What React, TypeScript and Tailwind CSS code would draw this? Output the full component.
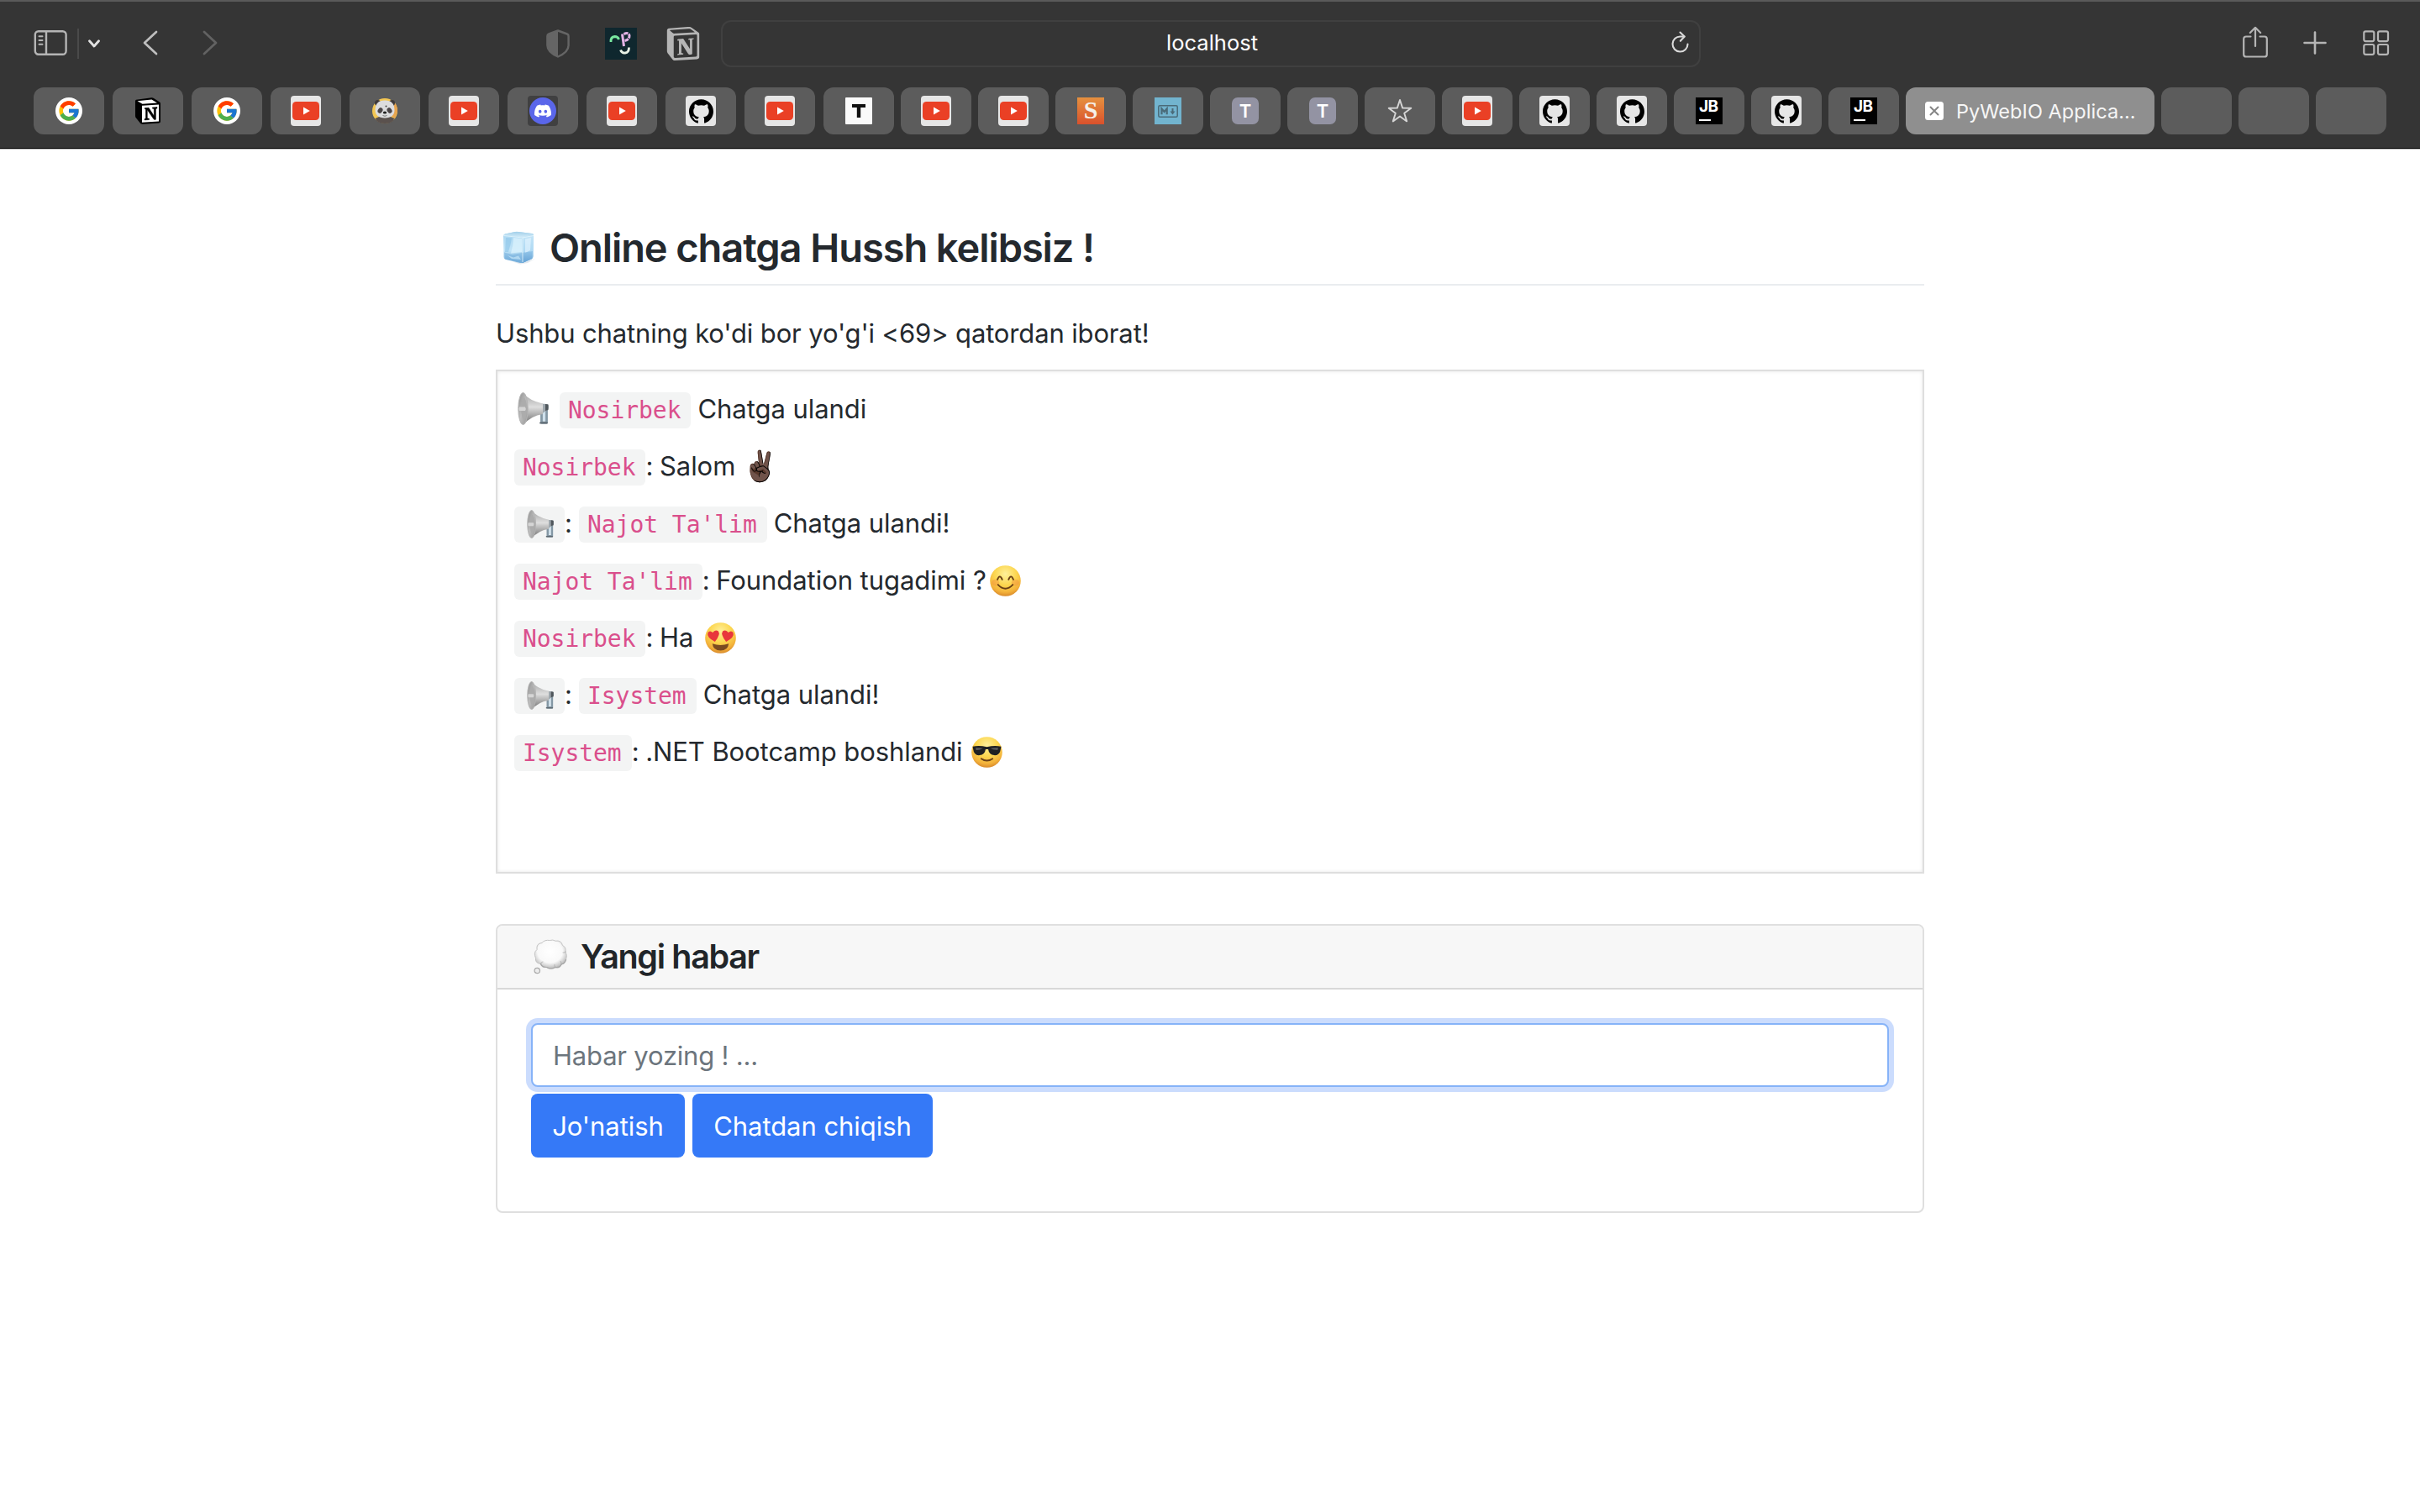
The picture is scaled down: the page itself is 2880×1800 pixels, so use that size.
import type { ReactNode } from "react";
import { FcGoogle } from "react-icons/fc";
import { SiNotion, SiDiscord, SiGithub } from "react-icons/si";

/* ---------- tab favicons ---------- */

function Google() {
  return (
    <span className="flex size-8 items-center justify-center rounded-full bg-white">
      <FcGoogle size={28} />
    </span>
  );
}

function Notion() {
  return (
    <svg viewBox="0 0 32 32" className="size-8">
      <path d="M2 2.800 L20.500 0.300 Q22 0.200 23 1 L30 5.500 Q31 6.200 31 7.500 V28.500 Q31 30.300 29 30.500 L10 31.800 Q8 31.900 7 30.800 L2 24.500 Q1 23.500 1 22 V4.500 Q1 3 2 2.800Z" fill="#000" />
      <path d="M3.500 4.300 L20.500 2.400 L27 6.500 L9.500 7.700Z" fill="#fff" />
      <path d="M9 9.800 L29 8.500 V28.500 L9 29.700Z" fill="#fff" />
      <path d="M12.300 12.600 L17 12.300 L23.300 22 V13.600 L21.300 13.100 V12 L27 11.600 V12.900 L25.400 13.500 V26.200 Q23.800 27.200 22.500 25.300 L15.300 14.800 V24.700 L17.500 25.300 V26.500 L12 26.900 V25.600 L13.500 25 V14.200 L12.300 13.800Z" fill="#000" stroke="#000" strokeWidth="0.500" />
    </svg>
  );
}

function YouTube() {
  return (
    <span className="flex size-9 items-center justify-center rounded-[4px] bg-[#e6e6e6]">
      <svg viewBox="0 0 32 22" className="h-[22px] w-8">
        <rect width="32" height="22" rx="4.500" fill="#ea4025" />
        <path d="M13 6.500 L20.800 11 L13 15.500Z" fill="#fff" />
      </svg>
    </span>
  );
}

function Panda() {
  return (
    <svg viewBox="0 0 32 32" className="size-8">
      <circle cx="16" cy="16" r="15" fill="#f3c653" />
      <path d="M16 16 L24 3 A15 15 0 0 1 31 17 L28 25Z" fill="#e8a54f" />
      <path d="M4.500 25 Q16 18 27.500 25 Q25 31 16 31 Q7 31 4.500 25Z" fill="#5a514e" />
      <circle cx="7.500" cy="6.500" r="3.500" fill="#3f3a3b" />
      <circle cx="24.500" cy="6.500" r="3.500" fill="#3f3a3b" />
      <path d="M4.500 15 Q4.500 3.500 16 3.500 Q27.500 3.500 27.500 15 Q27.500 24 16 24.500 Q4.500 24 4.500 15Z" fill="#dcdcde" />
      <ellipse cx="10.500" cy="15.500" rx="2.700" ry="3.500" transform="rotate(35 10.500 15.500)" fill="#4b4547" />
      <ellipse cx="21.500" cy="15.500" rx="2.700" ry="3.500" transform="rotate(-35 21.500 15.500)" fill="#4b4547" />
      <circle cx="17.500" cy="10.500" r="1" fill="#444" />
      <ellipse cx="16" cy="18" rx="2.200" ry="1.500" fill="#222" />
      <path d="M13.500 21.500 Q16 23 18.500 21.500" stroke="#777" strokeWidth="1" fill="none" />
    </svg>
  );
}

function Discord() {
  return (
    <span className="flex size-9 items-center justify-center rounded-[4px] bg-[#404041]">
      <span className="flex size-8 items-center justify-center rounded-full bg-[#5a66ea]">
        <SiDiscord size={20} color="#fff" />
      </span>
    </span>
  );
}

function GitHub() {
  return (
    <span className="flex size-9 items-center justify-center rounded-[4px] bg-[#e6e6e6]">
      <SiGithub size={29} color="#000" />
    </span>
  );
}

function TypeT() {
  return (
    <span className="flex size-8 items-center justify-center rounded-[1px] bg-[#fafafa]">
      <svg viewBox="0 0 16 16" className="size-4">
        <path d="M0 0 H16 V4 H10.200 V16 H5.800 V4 H0Z" fill="#111" />
      </svg>
    </span>
  );
}

function Sublime() {
  return (
    <span className="flex size-8 items-center justify-center bg-linear-to-b from-[#e5903f] to-[#d9502c] pb-[3px] font-['Liberation_Serif'] text-[30px] leading-8 font-bold text-[#f5f0ea]">
      S
    </span>
  );
}

function Markdown() {
  return (
    <span className="flex size-8 items-center justify-center bg-[#72b4cf]">
      <svg viewBox="0 0 24 15" className="h-[15px] w-6" fill="none" stroke="#4a6b79">
        <rect x="0.800" y="0.800" width="22.400" height="13.400" rx="1.500" strokeWidth="1.500" />
        <path d="M4.500 11.200 V4.500 L7.600 8 L10.700 4.500 V11.200" strokeWidth="2.200" />
        <path d="M17.500 4 V9" strokeWidth="2" />
        <path d="M14.500 7.500 L17.500 11.500 L20.500 7.500Z" fill="#4a6b79" stroke="none" />
      </svg>
    </span>
  );
}

function LetterT() {
  return (
    <span className="flex size-8 items-center justify-center rounded-[7px] bg-[#9393a3] font-['Inter'] text-[22px] leading-8 font-semibold text-white">
      T
    </span>
  );
}

function Star() {
  return (
    <svg viewBox="0 0 30 30" className="size-[30px]" fill="none" stroke="#d6d6d6" strokeWidth="1.900" strokeLinejoin="round">
      <path d="M15 2 L18.200 11.600 L28.300 11.700 L20.200 17.700 L23.200 27.400 L15 21.500 L6.800 27.400 L9.800 17.700 L1.700 11.700 L11.800 11.600Z" />
    </svg>
  );
}

function JetBrains() {
  return (
    <span className="flex size-8 flex-col bg-black pl-[4px] font-['Inter'] text-[19px] leading-[21px] font-bold tracking-[-0.500px] text-white">
      JB
      <span className="mt-[5px] h-[2px] w-[14px] bg-white" />
    </span>
  );
}

function Tab({ children }: { children?: ReactNode }) {
  return (
    <div className="flex h-14 w-[84px] shrink-0 items-center justify-center rounded-[12px] bg-[#5c5c5c]">
      {children}
    </div>
  );
}

/* ---------- browser chrome ---------- */

function Toolbar() {
  return (
    <div className="flex h-[98px] items-center pl-10">
      <svg viewBox="0 0 40 30" className="h-[30px] w-10 shrink-0" fill="none" stroke="#b5b5b5" strokeWidth="2.400" strokeLinecap="round">
        <rect x="1.800" y="1.200" width="36.800" height="27.600" rx="4" />
        <path d="M15 1.500 V28.500" />
        <path d="M6.500 7.300 H10.500 M6.500 12 H10.500 M6.500 16.700 H10.500" strokeWidth="2" />
      </svg>
      <div className="mt-[2px] ml-3 h-9 w-[2px] bg-[#4a4a4a]" />
      <svg viewBox="0 0 14 10" className="mt-[2px] ml-[11px] h-[10px] w-[14px]" fill="none" stroke="#e2e2e2" strokeWidth="2.800" strokeLinecap="round" strokeLinejoin="round">
        <path d="M1.500 1.800 L7 8 L12.500 1.800" />
      </svg>
      <svg viewBox="0 0 18 30" className="ml-[51px] h-[30px] w-[18px]" fill="none" stroke="#bebebe" strokeWidth="2.700" strokeLinecap="round" strokeLinejoin="round">
        <path d="M16 2 L2 15 L16 28" />
      </svg>
      <svg viewBox="0 0 18 30" className="ml-[53px] h-[30px] w-[18px]" fill="none" stroke="#626262" strokeWidth="2.700" strokeLinecap="round" strokeLinejoin="round">
        <path d="M2 2 L16 15 L2 28" />
      </svg>
      <svg viewBox="0 0 28 34" className="mt-[1px] ml-[391px] h-[34px] w-7">
        <path d="M14 1.500 L25 5.500 Q26.600 6 26.600 8 V19 Q26.600 27 14 32.500 Q1.400 27 1.400 19 V8 Q1.400 6 3 5.500Z" fill="none" stroke="#656565" strokeWidth="2.400" strokeLinejoin="round" />
        <path d="M14 1.500 L3 5.500 Q1.400 6 1.400 8 V19 Q1.400 27 14 32.500Z" fill="#656565" />
      </svg>
      <svg viewBox="0 0 38 38" className="mt-[2px] ml-[42px] size-[38px]" fill="none" strokeWidth="2.800">
        <rect width="38" height="38" fill="#0f272e" />
        <path d="M7 17 Q6.500 11 11.500 10.500 Q15.500 10.500 16.500 14" stroke="#79e8a0" />
        <path d="M20.500 7.500 L22.500 22" stroke="#e3b3e6" strokeWidth="3" />
        <path d="M22.500 7.500 Q28.500 5 29 9.500 Q29 14.500 23.500 15.500" stroke="#e3b3e6" strokeDasharray="5 1" strokeWidth="3" />
        <path d="M18.500 26.500 Q20 30.500 24 30 Q28.500 29.500 28.500 23.500" stroke="#e9f2e6" />
      </svg>
      <SiNotion className="mt-[1px] ml-[35px]" size={40} color="#b5b5b5" />
      <div className="mt-[2px] ml-[25px] flex h-14 w-[1166px] items-center justify-end rounded-[12px] border-2 border-[#404040] pr-3">
        <span className="mr-[491px] -mt-[2px] font-['Inter'] text-[25.500px] leading-8 text-white">localhost</span>
        <svg viewBox="0 0 22 28" className="-mt-[4px] h-7 w-[22px]" fill="none" stroke="#dadada" strokeWidth="2.100" strokeLinecap="round" strokeLinejoin="round">
          <path d="M16.500 7.500 H12 A9 9 0 1 0 20.500 16.500" />
          <path d="M11.500 2.500 L16.700 7.500 L11.800 12.800" />
        </svg>
      </div>
      <svg viewBox="0 0 32 38" className="-mt-[2px] ml-[644px] h-[38px] w-8" fill="none" stroke="#b5b5b5" strokeWidth="2.200" strokeLinecap="round" strokeLinejoin="round">
        <path d="M10.500 12.500 H5 Q2.200 12.500 2.200 15.300 V33.700 Q2.200 36.500 5 36.500 H27 Q29.800 36.500 29.800 33.700 V15.300 Q29.800 12.500 27 12.500 H21.500" />
        <path d="M16 24 V2 M9.800 8 L16 1.800 L22.200 8" />
      </svg>
      <svg viewBox="0 0 28 28" className="ml-[41px] size-7" stroke="#b5b5b5" strokeWidth="2.600" strokeLinecap="round">
        <path d="M14 1.500 V26.500 M1.500 14 H26.500" />
      </svg>
      <svg viewBox="0 0 32 30" className="ml-[43px] h-[30px] w-8" fill="none" stroke="#b5b5b5" strokeWidth="2.200">
        <rect x="1.300" y="1.300" width="12" height="11.800" rx="2" />
        <rect x="18" y="1.300" width="12" height="11.800" rx="2" />
        <rect x="1.300" y="17" width="12" height="11.800" rx="2" />
        <rect x="18" y="17" width="12" height="11.800" rx="2" />
      </svg>
    </div>
  );
}

function TabBar() {
  return (
    <div className="mt-1 flex gap-2 pl-10">
      <div className="flex gap-[10px] pr-[2px]">
        <Tab><Google /></Tab>
        <Tab><Notion /></Tab>
        <Tab><Google /></Tab>
        <Tab><YouTube /></Tab>
        <Tab><Panda /></Tab>
        <Tab><YouTube /></Tab>
        <Tab><Discord /></Tab>
        <Tab><YouTube /></Tab>
        <Tab><GitHub /></Tab>
        <Tab><YouTube /></Tab>
      </div>
      <Tab><TypeT /></Tab>
      <Tab><YouTube /></Tab>
      <Tab><YouTube /></Tab>
      <Tab><Sublime /></Tab>
      <Tab><Markdown /></Tab>
      <Tab><LetterT /></Tab>
      <Tab><LetterT /></Tab>
      <Tab><Star /></Tab>
      <Tab><YouTube /></Tab>
      <Tab><GitHub /></Tab>
      <Tab><GitHub /></Tab>
      <Tab><JetBrains /></Tab>
      <Tab><GitHub /></Tab>
      <Tab><JetBrains /></Tab>
      <div className="flex h-14 w-[296px] shrink-0 items-center rounded-[12px] bg-[#8f8f8f] pl-[23px]">
        <svg viewBox="0 0 22 22" className="size-[22px]">
          <rect width="22" height="22" rx="3.500" fill="#fff" />
          <path d="M6.500 6.500 L15.500 15.500 M15.500 6.500 L6.500 15.500" stroke="#858585" strokeWidth="2" strokeLinecap="round" />
        </svg>
        <span className="mt-[2px] ml-[15px] font-['Inter'] text-[23.500px] leading-8 tracking-[0.050px] whitespace-nowrap text-[#f6f6f6]">PyWebIO Applica...</span>
      </div>
      <Tab />
      <Tab />
      <Tab />
    </div>
  );
}

/* ---------- emoji drawings ---------- */

function IceCube() {
  return (
    <svg viewBox="0 0 40 40" className="size-10">
      <defs>
        <linearGradient id="iceTop" x1="0" y1="0" x2="0" y2="1">
          <stop offset="0" stopColor="#a3cfe9" />
          <stop offset="1" stopColor="#d2ecf9" />
        </linearGradient>
        <linearGradient id="iceLeft" x1="0" y1="0" x2="0" y2="1">
          <stop offset="0" stopColor="#a9d6f1" />
          <stop offset="0.600" stopColor="#c0e3f7" />
          <stop offset="1" stopColor="#79b1dc" />
        </linearGradient>
        <linearGradient id="iceRight" x1="0" y1="0" x2="0" y2="1">
          <stop offset="0" stopColor="#c3e4f7" />
          <stop offset="0.600" stopColor="#add8f3" />
          <stop offset="1" stopColor="#6ba5d5" />
        </linearGradient>
      </defs>
      <path d="M3 33 Q20 41 40 33 L31 38 L22 39.500Z" fill="#e2e8ee" />
      <path d="M2 6 Q2 4 4 3.500 L16 1 Q18 0.700 20 1 L36 3 Q38.500 3.400 38 6 L37.500 30 Q37.500 32.500 35.500 33.500 L26 37.500 Q24 38.300 22 38 L5 34 Q2.500 33.300 2.500 31Z" fill="url(#iceLeft)" />
      <path d="M25 7 L38 5 L37.500 30 Q37.500 32.500 35.500 33.500 L25 38Z" fill="url(#iceRight)" />
      <path d="M2.500 5 Q3 4 4 3.500 L16 1 L20 1 L36 3 Q37.800 3.300 38 4.500 L25 7.500Z" fill="url(#iceTop)" />
      <path d="M5 8 L12 8.500 Q11 16 8 25 L4 25Z" fill="#84bfe6" opacity="0.500" />
      <path d="M14 8 L24 9 V25 L11 26.500 Q14 17 14 8Z" fill="#d9f1fc" opacity="0.800" />
      <path d="M28 9.500 L35 8 L34 23 L28 26Z" fill="#e3f5ff" opacity="0.650" />
      <path d="M3 25.500 L13 28 L24 26 L37 24 L36 33 L25 38 L4 33.500Z" fill="#5b9fd4" opacity="0.350" />
      <path d="M7 29 L14 31.500 L20 29.500 L23 34 L12 33Z" fill="#c4e5f8" opacity="0.700" />
      <path d="M2.500 5.500 L25 8 L38 5.500 M25 8 V37" fill="none" stroke="#e6f6fd" strokeWidth="1" opacity="0.800" />
    </svg>
  );
}

function Megaphone({ className }: { className: string }) {
  return (
    <svg viewBox="0 0 38 39" className={className}>
      <defs>
        <linearGradient id="horn" x1="0" y1="0" x2="0" y2="1">
          <stop offset="0" stopColor="#a3a3a3" />
          <stop offset="0.450" stopColor="#dedede" />
          <stop offset="1" stopColor="#6c6c6c" />
        </linearGradient>
        <linearGradient id="bell" x1="0" y1="0" x2="1" y2="1">
          <stop offset="0" stopColor="#8d8d8d" />
          <stop offset="0.500" stopColor="#bdbdbd" />
          <stop offset="1" stopColor="#969696" />
        </linearGradient>
      </defs>
      <path d="M28.500 20 V36 H34.500 V17" fill="none" stroke="#8397a4" strokeWidth="2.800" strokeLinejoin="round" />
      <path d="M31.500 17 V34" stroke="#c6dbe8" strokeWidth="2.500" />
      <path d="M27 36.500 H35" stroke="#5d6870" strokeWidth="1.800" strokeLinecap="round" />
      <path d="M27 13.500 L35 14 Q37 14.500 37 18 Q37 20 35.500 21 L28 26Z" fill="#9da6ac" />
      <path d="M33 14 L36.500 14.500 V21 L33 22Z" fill="#4f565b" />
      <path d="M6 0.500 Q14 10 30 13.500 V26 Q16 28 7 38.500Z" fill="url(#horn)" />
      <ellipse cx="6.500" cy="19.500" rx="5.700" ry="19" fill="url(#bell)" stroke="#b4b4b4" strokeWidth="1" />
      <ellipse cx="7.500" cy="19.500" rx="3.400" ry="13" fill="#acacac" />
      <path d="M2 17.500 H9 Q10.500 19.500 9 22 H2 Q1 19.500 2 17.500Z" fill="#d5d5d5" />
    </svg>
  );
}

function FaceDefs() {
  return (
    <svg className="absolute size-0" aria-hidden="true">
      <defs>
        <radialGradient id="face" cx="0.500" cy="0.280" r="0.720">
          <stop offset="0" stopColor="#fff09a" />
          <stop offset="0.500" stopColor="#fcd64f" />
          <stop offset="0.820" stopColor="#f3b13a" />
          <stop offset="1" stopColor="#d98a2b" />
        </radialGradient>
      </defs>
    </svg>
  );
}

function Smile() {
  return (
    <svg viewBox="0 0 36 36" className="mt-[6px] ml-1 size-[37px] self-start">
      <circle cx="18" cy="18" r="17.800" fill="url(#face)" />
      <ellipse cx="6.500" cy="20" rx="4.500" ry="3.800" fill="#f0803c" opacity="0.350" />
      <ellipse cx="29.500" cy="20" rx="4.500" ry="3.800" fill="#f0803c" opacity="0.350" />
      <g fill="none" stroke="#6b4015" strokeWidth="1.900" strokeLinecap="round">
        <path d="M8.800 16.500 Q11.500 9.500 14.300 16.500" />
        <path d="M21.700 16.500 Q24.500 9.500 27.200 16.500" />
        <path d="M9.500 22.500 Q18 31.500 26.500 22.500" />
      </g>
    </svg>
  );
}

function HeartEyes() {
  return (
    <svg viewBox="0 0 36 36" className="mt-[6px] ml-[14px] size-[37px] self-start">
      <circle cx="18" cy="18" r="17.800" fill="url(#face)" />
      <path d="M8.500 24.500 Q18 28 27.500 24.500 Q26.500 32.500 18 32.500 Q9.500 32.500 8.500 24.500Z" fill="#7a4a20" />
      <path d="M11.500 22.300 Q1.500 17 3.300 11.800 Q5.500 8.500 9 11.700 Q11.500 7.800 15.300 10 Q18.500 14 11.500 22.300Z" fill="#e8373c" />
      <path d="M24.500 22.300 Q34.500 17 32.700 11.800 Q30.500 8.500 27 11.700 Q24.500 7.800 20.700 10 Q17.500 14 24.500 22.300Z" fill="#e8373c" />
    </svg>
  );
}

function Sunglasses() {
  return (
    <svg viewBox="0 0 36 36" className="mt-[6px] ml-[10px] size-[37px] self-start">
      <circle cx="18" cy="18" r="17.800" fill="url(#face)" />
      <path d="M1.500 11.500 Q9 9.500 18 12 Q27 9.500 34.500 11.500 L34 14 Q33 22 26.500 21.500 Q20.500 21 19.500 14.500 H16.500 Q15.500 21 9.500 21.500 Q3 22 2 14Z" fill="#1f2022" />
      <path d="M5 13 L13.500 13.300 Q10 15.500 5.500 15.500Z M22 13.300 L31 13 L30.500 15.300 Q25 15.500 22 13.300Z" fill="#85898c" opacity="0.600" />
      <path d="M11.500 25.500 Q18 30 24.500 25.500" fill="none" stroke="#6b4015" strokeWidth="1.900" strokeLinecap="round" />
    </svg>
  );
}

function ThoughtBalloon() {
  return (
    <svg viewBox="0 0 40 42" className="h-[42px] w-10">
      <defs>
        <radialGradient id="cloud" cx="0.480" cy="0.400" r="0.600">
          <stop offset="0" stopColor="#ffffff" />
          <stop offset="0.650" stopColor="#f9f9f9" />
          <stop offset="1" stopColor="#b9b9b9" />
        </radialGradient>
      </defs>
      <g fill="url(#cloud)">
        <path d="M4 12.500 Q3 5 10 4.500 Q13 0.500 19.500 1.500 Q23 0.200 26 2.200 Q33 1 34.500 7.500 Q39 9.500 38 15 Q40.500 19 38.500 25 Q37 29.500 33 30 Q31.500 35.500 26 33.500 Q20.500 37 15.500 33.500 Q9.500 34.500 8.500 29.500 Q1.500 28.500 2.500 22.500 Q-0.500 16 4 12.500Z" stroke="#c4c4c4" strokeWidth="1" />
      </g>
      <g fill="none" stroke="#a6a6a6" strokeWidth="1.200" strokeLinecap="round">
        <path d="M8.500 29.500 Q10 33.500 15.500 33.500 Q20.500 36.500 26 33.500 Q31.500 34.500 33 30 Q37 29.500 38.500 24.500" />
        <path d="M8.500 29.500 Q9 27.500 11 27 M26 33.500 Q24.500 32 25 30.500 M33 30 Q33.500 28 32 26.500 M38 15 Q36.500 16.500 35 16" opacity="0.600" />
      </g>
      <circle cx="4.300" cy="37.500" r="3.200" fill="#ededed" stroke="#a9a9a9" strokeWidth="1.200" />
    </svg>
  );
}

/* ---------- chat ---------- */

function Code({ children }: { children: ReactNode }) {
  return (
    <code className="rounded-[6px] bg-[#f3f4f4] py-[5px] pr-[12px] pl-[10px] font-['DejaVu_Sans_Mono',monospace] text-[28px] leading-[33px] text-[#da4f8c]">
      {children}
    </code>
  );
}

function Row({ children }: { children: ReactNode }) {
  return <div className="mb-5 flex h-12 items-baseline whitespace-pre">{children}</div>;
}

function Colon() {
  return <span className="w-[16.500px]">:</span>;
}

function Speaker() {
  return (
    <span className="mt-[4px] flex h-[43px] w-[60px] self-start rounded-[6px] bg-[#f3f4f4] pt-[4px] pl-[15px]">
      <Megaphone className="h-[34px] w-[33px]" />
    </span>
  );
}

export default function App() {
  return (
    <div className="h-[1800px] w-[2880px] overflow-hidden bg-white font-['Inter',sans-serif] text-[31px] leading-[48px] text-[#24292e]">
      <header className="h-[178px] border-t-2 border-b border-t-[#5a5a5a] border-b-[#b9b9b9] bg-[#353535]">
        <div className="h-[175px] border-b border-black">
          <Toolbar />
          <TabBar />
        </div>
      </header>

      <main className="mx-auto w-[1700px]">
        <FaceDefs />
        <h1 className="mt-[82px] flex h-20 items-center border-b-2 border-[#eaecef] pl-[7px] text-[47px] leading-[60px] font-semibold tracking-[-1.080px]">
          <span className="mb-[9px]"><IceCube /></span>
          <span className="mb-[9px] ml-[17px]">Online chatga Hussh kelibsiz !</span>
        </h1>
        <p className="mt-[33px] tracking-[-0.140px]">Ushbu chatning ko'di bor yo'g'i &lt;69&gt; qatordan iborat!</p>

        <section className="mt-[19px] h-[600px] border-2 border-[#dedede] px-5 pt-[21px] tracking-[-0.050px] shadow-[inset_0_0_4px_rgba(0,0,0,0.1)]">
          <Row>
            <Megaphone className="mt-[4px] mr-3 ml-[4px] h-[39px] w-[38px] shrink-0 self-start" />
            <Code>Nosirbek</Code>
            <span className="ml-2">Chatga ulandi</span>
          </Row>
          <Row>
            <Code>Nosirbek</Code>
            <Colon />
            <span>Salom</span>
            <span className="ml-2 self-start text-[35px] leading-[46px]">✌🏿</span>
          </Row>
          <Row>
            <Speaker />
            <span className="w-[17px]">:</span>
            <Code>Najot Ta'lim</Code>
            <span className="ml-2">Chatga ulandi!</span>
          </Row>
          <Row>
            <Code>Najot Ta'lim</Code>
            <Colon />
            <span>Foundation tugadimi ?</span>
            <Smile />
          </Row>
          <Row>
            <Code>Nosirbek</Code>
            <Colon />
            <span>Ha</span>
            <HeartEyes />
          </Row>
          <Row>
            <Speaker />
            <span className="w-[17px]">:</span>
            <Code>Isystem</Code>
            <span className="ml-2">Chatga ulandi!</span>
          </Row>
          <Row>
            <Code>Isystem</Code>
            <Colon />
            <span className="tracking-[-0.080px]">.NET Bootcamp boshlandi</span>
            <Sunglasses />
          </Row>
        </section>

        <section className="mt-[60px] h-[344px] overflow-hidden rounded-[8px] border-2 border-[#dfdfdf] text-[#212529]">
          <h2 className="flex h-[76px] items-center border-b-2 border-[#d8d8d8] bg-[#f7f7f7] pl-[43px] text-[39.500px] leading-[48px] font-semibold tracking-[-1.350px]">
            <ThoughtBalloon />
            <span className="ml-[16px]">Yangi habar</span>
          </h2>
          <div className="px-10 pt-10">
            <input
              className="block h-[76px] w-full rounded-[8px] border-2 border-[#86b3f8] bg-white px-6 text-[31px] tracking-[-0.200px] shadow-[0_0_0_6px_#cbdcfd] outline-none placeholder:text-[#6c757d] placeholder:opacity-100"
              placeholder="Habar yozing ! ..."
            />
            <div className="mt-2 flex gap-[9px] tracking-[-0.050px] text-white">
              <button className="h-[76px] w-[183px] rounded-[8px] bg-[#3579f7] pt-px">Jo'natish</button>
              <button className="h-[76px] w-[286px] rounded-[8px] bg-[#3579f7] pt-px">Chatdan chiqish</button>
            </div>
          </div>
        </section>
      </main>
    </div>
  );
}
